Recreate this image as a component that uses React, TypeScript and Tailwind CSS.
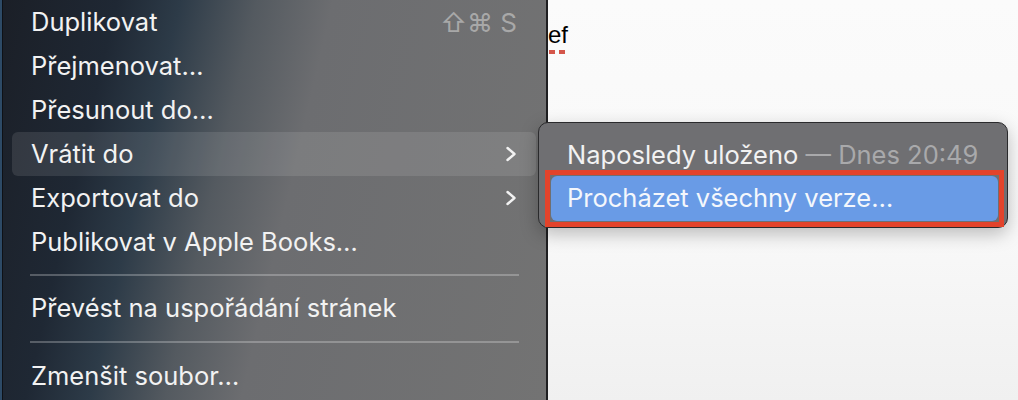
import React from 'react'

type Row =
  | { kind: 'item'; label: string; shortcut?: string; submenu?: boolean; hover?: boolean }
  | { kind: 'sep'; h: number }

const ROWS: Row[] = [
  { kind: 'item', label: 'Duplikovat', shortcut: '⇧⌘ S' },
  { kind: 'item', label: 'Přejmenovat…' },
  { kind: 'item', label: 'Přesunout do…' },
  { kind: 'item', label: 'Vrátit do', submenu: true, hover: true },
  { kind: 'item', label: 'Exportovat do', submenu: true },
  { kind: 'item', label: 'Publikovat v Apple Books…' },
  { kind: 'sep', h: 22 },
  { kind: 'item', label: 'Převést na uspořádání stránek' },
  { kind: 'sep', h: 24 },
  { kind: 'item', label: 'Zmenšit soubor…' },
]

function Chevron() {
  return (
    <svg width="12" height="16" viewBox="0 0 12 16" fill="none" className="shrink-0">
      <path d="M2.5 2l7 6-7 6" stroke="#f2f2f2" strokeWidth="2.4" strokeLinecap="round" strokeLinejoin="round" />
    </svg>
  )
}

function MenuRow({ row }: { row: Row }) {
  if (row.kind === 'sep') {
    return (
      <div className={`flex items-center pl-[27px] pr-[27px] ${row.h === 22 ? 'h-[22px]' : 'h-[24px]'}`}>
        <div className="h-[2px] w-full bg-white/25" />
      </div>
    )
  }
  return (
    <div
      className={`ml-[9px] mr-[10px] h-[44px] flex items-center pl-[19px] pr-[19px] rounded-[6px] ${
        row.hover ? 'bg-white/10' : ''
      }`}
    >
      <span className="flex-1 text-[25.5px] text-[#f2f2f2]">{row.label}</span>
      {row.shortcut && <span className="text-[26px] text-[#a8a8a8]">{row.shortcut}</span>}
      {row.submenu && <Chevron />}
    </div>
  )
}

export default function App() {
  return (
    <div className="relative w-[1018px] h-[400px] overflow-hidden flex bg-white font-['Inter','DejaVu_Sans',sans-serif]">
      {/* window edge on the far left */}
      <div className="w-[3px] h-full bg-[#2d4a66] border-r border-[#0e1116]" />

      {/* main menu */}
      <div className="w-[545px] h-full border-r-[2px] border-[#1f1f21] bg-[linear-gradient(103deg,#1b1f27_0%,#1f2834_18%,#2d3b48_28%,#545a60_40%,#6c6d70_52%,#737373_100%)]">
        {ROWS.map((row, i) => (
          <MenuRow key={i} row={row} />
        ))}
      </div>

      {/* document page */}
      <div className="flex-1 h-full bg-[linear-gradient(180deg,#fbfbfb_0%,#f8f8f8_60%,#f0f0f0_100%)]">
        <div className="pt-[21px] pl-[0px] text-[24px] leading-[28px] text-black font-['Liberation_Sans',sans-serif]">
          ef
        </div>
        <div className="flex gap-[4px] pl-[1px] mt-[1px]">
          <div className="w-[6px] h-[4px] bg-[#d4564a]" />
          <div className="w-[6px] h-[4px] bg-[#d4564a]" />
        </div>
      </div>

      {/* submenu */}
      <div className="absolute left-[538px] top-[122px] w-[470px] h-[106px] rounded-[10px] border border-[#2a2a2c] bg-[#6f6f72] shadow-[0_6px_18px_rgba(0,0,0,0.25)] pt-[10px] flex flex-col">
        <div className="h-[44px] flex items-center pl-[28px]">
          <span className="text-[25.5px] text-[#f2f2f2]">Naposledy uloženo</span>
          <span className="text-[25.5px] text-[#a9a9ab]">&nbsp;— Dnes 20:49</span>
        </div>
        <div className="ml-[6px] mr-[3px] -mt-[7px] h-[57px] border-[5px] border-[#e3432b] p-[1px]">
          <div className="h-full rounded-[6px] bg-[#699be6] flex items-center pl-[16px]">
            <span className="text-[25.5px] text-[#f4f7fc]">Procházet všechny verze…</span>
          </div>
        </div>
      </div>
    </div>
  )
}
